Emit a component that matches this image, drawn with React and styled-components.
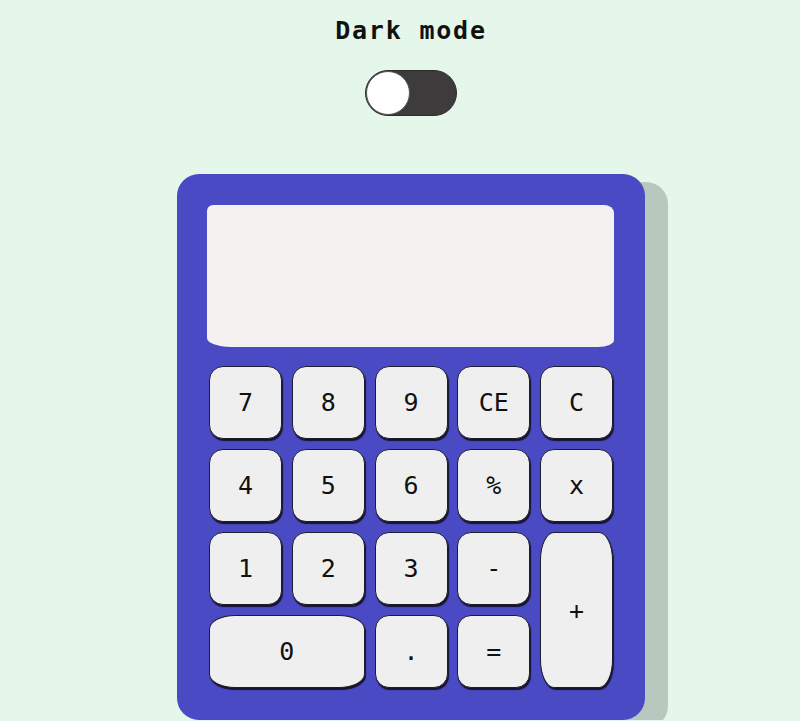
import React, { useState } from 'react';
import styled, { createGlobalStyle } from 'styled-components';

const GlobalStyle = createGlobalStyle`
body {
    margin: 0;
    background: #e5f6ea;
    font-family: "DejaVu Sans Mono", "Liberation Mono", monospace;
    overflow: hidden;
}
`

const Page = styled.div`
display: flex;
flex-direction: column;
align-items: center;
padding-left: 22px;
padding-top: 15px;
`

const Title = styled.h1`
margin: 0;
font-size: 25px;
line-height: 32px;
letter-spacing: 1.8px;
font-weight: bold;
color: #111;
`

const Switch = styled.button`
margin-top: 23px;
width: 92px;
height: 46px;
border-radius: 23px;
border: 1px solid #2d2b2b;
background: ${({ on }) => (on ? '#4a4ac4' : '#3d3b3b')};
padding: 0;
display: flex;
justify-content: ${({ on }) => (on ? 'flex-end' : 'flex-start')};
align-items: center;
cursor: pointer;
`

const Knob = styled.span`
width: 44px;
height: 44px;
border-radius: 50%;
background: #fff;
border: 1px solid #555;
box-sizing: border-box;
`

const Body = styled.div`
margin-top: 58px;
width: 468px;
height: 546px;
box-sizing: border-box;
background: #4a4ac4;
border-radius: 22px;
box-shadow: 23px 8px 0 #b7c9bf;
padding: 31px 31px 31px 30px;
display: flex;
flex-direction: column;
gap: 19px;
`

const Screen = styled.div`
height: 142px;
background: #f6f1f1;
border-radius: 6px 10px 16px 24px / 6px 8px 7px 9px;
`

const Keys = styled.div`
display: grid;
grid-template-columns: repeat(5, 73px);
grid-auto-rows: 73px;
gap: 10px 9.75px;
padding-left: 2px;
`

const Key = styled.button`
grid-column: span ${({ wide }) => (wide ? 2 : 1)};
grid-row: span ${({ tall }) => (tall ? 2 : 1)};
background: #f0efef;
border: 1.5px solid #1d1b2e;
border-radius: ${({ wide, tall }) =>
    wide ? '26px / 14px' : tall ? '14px / 28px' : '14px'};
box-shadow: 1px 2px 1px #15142e;
font-family: "DejaVu Sans Mono", "Liberation Mono", monospace;
font-size: 25px;
color: #111;
padding: 0;
cursor: pointer;
`

const keys = [
    ['7'], ['8'], ['9'], ['CE'], ['C'],
    ['4'], ['5'], ['6'], ['%'], ['x'],
    ['1'], ['2'], ['3'], ['-'], ['+', 'tall'],
    ['0', 'wide'], ['.'], ['='],
];

export default function App() {
    const [dark, setDark] = useState(false);

    return (
        <>
            <GlobalStyle />
            <Page>
                <Title>Dark mode</Title>
                <Switch on={dark ? 1 : 0} onClick={() => setDark(!dark)}>
                    <Knob />
                </Switch>
                <Body>
                    <Screen />
                    <Keys>
                        {keys.map(([label, kind]) => (
                            <Key key={label} wide={kind === 'wide' ? 1 : 0} tall={kind === 'tall' ? 1 : 0}>
                                {label}
                            </Key>
                        ))}
                    </Keys>
                </Body>
            </Page>
        </>
    );
}
